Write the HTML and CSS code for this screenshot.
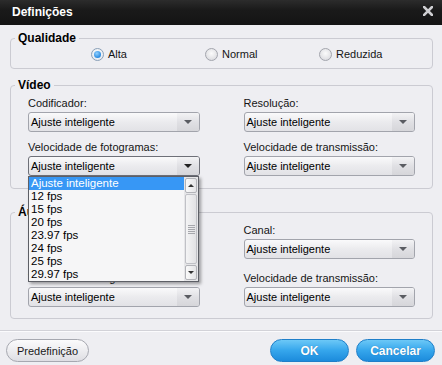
FILE: index.html
```html
<!DOCTYPE html>
<html lang="pt">
<head>
<meta charset="utf-8">
<title>Definições</title>
<link rel="stylesheet" href="styles.css">
</head>
<body>
<div class="window">
  <header class="titlebar">
    <span class="title">Definições</span>
    <span class="close" aria-label="Fechar">
      <svg width="10" height="10" viewBox="0 0 10 10"><path d="M1 1 L9 9 M9 1 L1 9" stroke="#cfcfd2" stroke-width="2.6" stroke-linecap="square" fill="none"/></svg>
    </span>
  </header>

  <main class="content">
    <section class="group group-quality">
      <div class="legend">Qualidade</div>
      <div class="radios">
        <label class="radio"><span class="dot checked"></span>Alta</label>
        <label class="radio"><span class="dot"></span>Normal</label>
        <label class="radio"><span class="dot"></span>Reduzida</label>
      </div>
    </section>

    <section class="group group-video">
      <div class="legend">Vídeo</div>
      <div class="fields">
        <div class="field">
          <div class="label">Codificador:</div>
          <div class="select"><span class="value">Ajuste inteligente</span><span class="arrow"></span></div>
        </div>
        <div class="field">
          <div class="label">Resolução:</div>
          <div class="select"><span class="value">Ajuste inteligente</span><span class="arrow"></span></div>
        </div>
        <div class="field">
          <div class="label">Velocidade de fotogramas:</div>
          <div class="select focused"><span class="value">Ajuste inteligente</span><span class="arrow"></span>
            <div class="listbox">
              <ul class="options">
                <li class="option selected">Ajuste inteligente</li>
                <li class="option">12 fps</li>
                <li class="option">15 fps</li>
                <li class="option">20 fps</li>
                <li class="option">23.97 fps</li>
                <li class="option">24 fps</li>
                <li class="option">25 fps</li>
                <li class="option">29.97 fps</li>
              </ul>
              <div class="scrollbar">
                <span class="sb-btn"><span class="tri-up"></span></span>
                <span class="sb-thumb"><span class="grip"></span></span>
                <span class="sb-btn"><span class="tri-down"></span></span>
              </div>
            </div>
          </div>
        </div>
        <div class="field">
          <div class="label">Velocidade de transmissão:</div>
          <div class="select"><span class="value">Ajuste inteligente</span><span class="arrow"></span></div>
        </div>
      </div>
    </section>

    <section class="group group-audio">
      <div class="legend">Áudio</div>
      <div class="fields">
        <div class="field covered">
          <div class="label">Codificador:</div>
          <div class="select"><span class="value">Ajuste inteligente</span><span class="arrow"></span></div>
        </div>
        <div class="field">
          <div class="label">Canal:</div>
          <div class="select"><span class="value">Ajuste inteligente</span><span class="arrow"></span></div>
        </div>
        <div class="field">
          <div class="label">Taxa de amostragem:</div>
          <div class="select"><span class="value">Ajuste inteligente</span><span class="arrow"></span></div>
        </div>
        <div class="field">
          <div class="label">Velocidade de transmissão:</div>
          <div class="select"><span class="value">Ajuste inteligente</span><span class="arrow"></span></div>
        </div>
      </div>
    </section>
  </main>

  <footer class="footer">
    <button class="btn btn-light">Predefinição</button>
    <div class="footer-right">
      <button class="btn btn-blue">OK</button>
      <button class="btn btn-blue">Cancelar</button>
    </div>
  </footer>
</div>
</body>
</html>
```

FILE: styles.css
```css
* { box-sizing: border-box; }

html, body {
  margin: 0;
  padding: 0;
  background: #eeeef2;
}

body {
  font-family: "Liberation Sans", Arial, sans-serif;
  font-size: 11px;
  color: #151515;
}

.window {
  width: 442px;
  height: 365px;
  background: #eeeef2;
  overflow: hidden;
}

.titlebar {
  height: 25px;
  display: flex;
  align-items: center;
  justify-content: space-between;
  padding: 0 9px 1px 12px;
  background: linear-gradient(#2c2c2c, #1a1a1a 40%, #141414);
}

.title {
  color: #ffffff;
  font-weight: bold;
  font-size: 12px;
}

.close {
  display: flex;
  width: 10px;
  height: 10px;
  margin-bottom: 2px;
}

.content {
  padding: 0 9px 0 10px;
}

.group {
  border: 1px solid #cbcbd2;
  border-radius: 4px;
  padding: 0 17px 11px 17px;
}

.legend {
  width: fit-content;
  margin: -8px 0 0 -13px;
  padding: 0 3px;
  background: #eeeef2;
  font-weight: bold;
  font-size: 12px;
  line-height: 14px;
  color: #000;
}

.group-quality {
  margin-top: 13px;
  padding-bottom: 7px;
}

.radios {
  display: flex;
  margin: 2px 0 0 63px;
}

.radio {
  flex: none;
  width: 114px;
  display: flex;
  align-items: center;
  gap: 4px;
  line-height: 14px;
  font-size: 11px;
}

.radio:last-child {
  width: auto;
}

.dot {
  flex: none;
  width: 13px;
  height: 13px;
  border-radius: 50%;
  border: 1px solid #a3a5ad;
  background: radial-gradient(circle at 50% 40%, #fbfbfb, #dcdce0 80%);
  display: flex;
  align-items: center;
  justify-content: center;
}

.dot.checked {
  border-color: #8aa0b8;
  background: radial-gradient(circle at 50% 40%, #ffffff, #e4e8ee 80%);
}

.dot.checked::after {
  content: "";
  width: 7px;
  height: 7px;
  border-radius: 50%;
  background: radial-gradient(circle at 40% 35%, #8fd0ff, #2a8ae0 70%);
}

.group-video {
  margin-top: 16px;
  padding-bottom: 12px;
}

.group-audio {
  margin-top: 23px;
}

.fields {
  display: grid;
  grid-template-columns: 1fr 1fr;
  column-gap: 44px;
  row-gap: 8px;
  margin-top: 4px;
}

.group-audio .fields {
  row-gap: 12px;
}

.field.covered {
  visibility: hidden;
}

.label {
  line-height: 14px;
  height: 14px;
  margin-bottom: 2px;
  white-space: nowrap;
}

.select {
  position: relative;
  height: 20px;
  border: 1px solid #a2a4ac;
  border-radius: 3px;
  background: linear-gradient(#fafafb, #ebebee 50%, #e2e2e6);
  display: flex;
  align-items: center;
}

.select .value {
  flex: 1;
  padding-left: 2px;
  line-height: 18px;
  white-space: nowrap;
  color: #000;
}

.select .arrow {
  width: 22px;
  height: 18px;
  border-radius: 0 2px 2px 0;
  background: linear-gradient(#f3f3f5, #e0e0e4 50%, #d6d6da);
  display: flex;
  align-items: center;
  justify-content: center;
}

.select .arrow::after {
  content: "";
  border-left: 4px solid transparent;
  border-right: 4px solid transparent;
  border-top: 4px solid #5a5c62;
}

.select.focused {
  border-color: #6e7078;
}

.select.focused .arrow::after {
  border-top-color: #222;
}

.listbox {
  position: absolute;
  left: -1px;
  top: calc(100% + 1px);
  width: 171px;
  height: 106px;
  border: 1px solid #5d5f66;
  background: #f6f6f7;
  display: flex;
  box-shadow: 2px 2px 3px rgba(0, 0, 0, 0.35);
  z-index: 5;
}

.options {
  list-style: none;
  margin: 0;
  padding: 0;
  flex: 1;
}

.option {
  height: 13px;
  line-height: 13px;
  padding-left: 2px;
  font-size: 11.5px;
  color: #000;
  white-space: nowrap;
}

.option.selected {
  background: #3797f5;
  color: #fff;
}

.scrollbar {
  width: 14px;
  display: flex;
  flex-direction: column;
  background: #e6e6e8;
  padding: 1px 0;
  gap: 1px;
}

.sb-btn {
  height: 15px;
  margin: 0 1px;
  border: 1px solid #b2b3b8;
  border-radius: 2px;
  background: linear-gradient(90deg, #fafafa, #e4e4e6);
  display: flex;
  align-items: center;
  justify-content: center;
}

.sb-thumb {
  flex: 1;
  margin: 0 1px;
  border: 1px solid #c0c1c6;
  border-radius: 2px;
  background: linear-gradient(90deg, #f4f4f5, #e2e2e4);
  display: flex;
  align-items: center;
  justify-content: center;
}

.grip {
  width: 7px;
  height: 9px;
  background: repeating-linear-gradient(#a6a7ac 0 1px, transparent 1px 2px);
}

.tri-up {
  border-left: 3px solid transparent;
  border-right: 3px solid transparent;
  border-bottom: 3px solid #333;
}

.tri-down {
  border-left: 3px solid transparent;
  border-right: 3px solid transparent;
  border-top: 3px solid #333;
}

.footer {
  margin-top: 11px;
  border-top: 1px solid #d2d2d8;
  box-shadow: inset 0 1px 0 #fbfbfd;
  padding: 8px 7px 0 6px;
  display: flex;
  justify-content: space-between;
}

.footer-right {
  display: flex;
  gap: 7px;
}

.btn {
  height: 23px;
  border-radius: 12px;
  font-family: "Liberation Sans", Arial, sans-serif;
  padding: 0;
  cursor: default;
}

.btn-light {
  width: 83px;
  border: 1px solid #a6a8b0;
  background: linear-gradient(#fbfbfc, #ededf0 50%, #dedee3);
  color: #1a1a1a;
  font-size: 11px;
}

.btn-blue {
  width: 79px;
  border: 1px solid #1f7fc9;
  background: linear-gradient(#6cc8f7, #35a6ec 50%, #1c8bdc);
  color: #fff;
  font-size: 12px;
  font-weight: bold;
  text-shadow: 0 0 1px rgba(0, 60, 120, 0.5);
}
```
